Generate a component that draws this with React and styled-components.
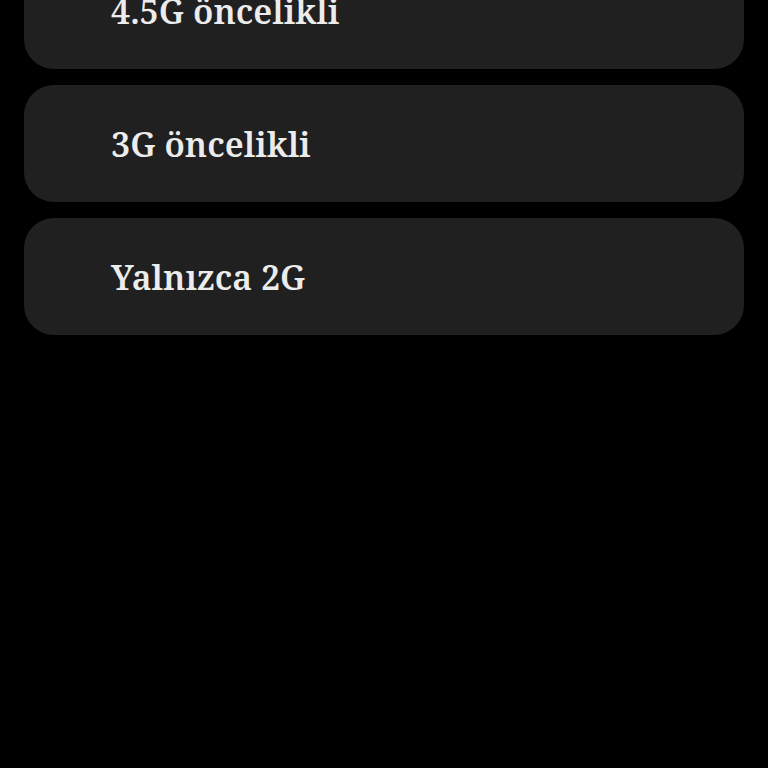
import React from "react";
import styled, { createGlobalStyle } from "styled-components";

const Global = createGlobalStyle`
  html, body { margin: 0; background: #000; }
  body { overflow: hidden; }
`;

// ekran (kaydırılmış liste)
const Screen = styled.div`
  width: 768px;
  height: 768px;
  overflow: hidden;
  background: #000;
`;

const List = styled.div`
  display: flex;
  flex-direction: column;
  gap: 16px;
  padding: 0 24px;
  margin-top: -48px;
`;

const Option = styled.div`
  height: 117px;
  display: flex;
  align-items: center;
  padding-left: 87px;
  background: #202020;
  border-radius: 30px;
  color: #ececec;
  font-family: "Noto Serif", "DejaVu Serif", serif;
  font-weight: 600;
  font-size: 34px;
  box-sizing: border-box;
`;

const options = ["4.5G öncelikli", "3G öncelikli", "Yalnızca 2G"];

export default function App() {
  return (
    <Screen>
      <Global />
      <List>
        {options.map((o) => (
          <Option key={o}>{o}</Option>
        ))}
      </List>
    </Screen>
  );
}
